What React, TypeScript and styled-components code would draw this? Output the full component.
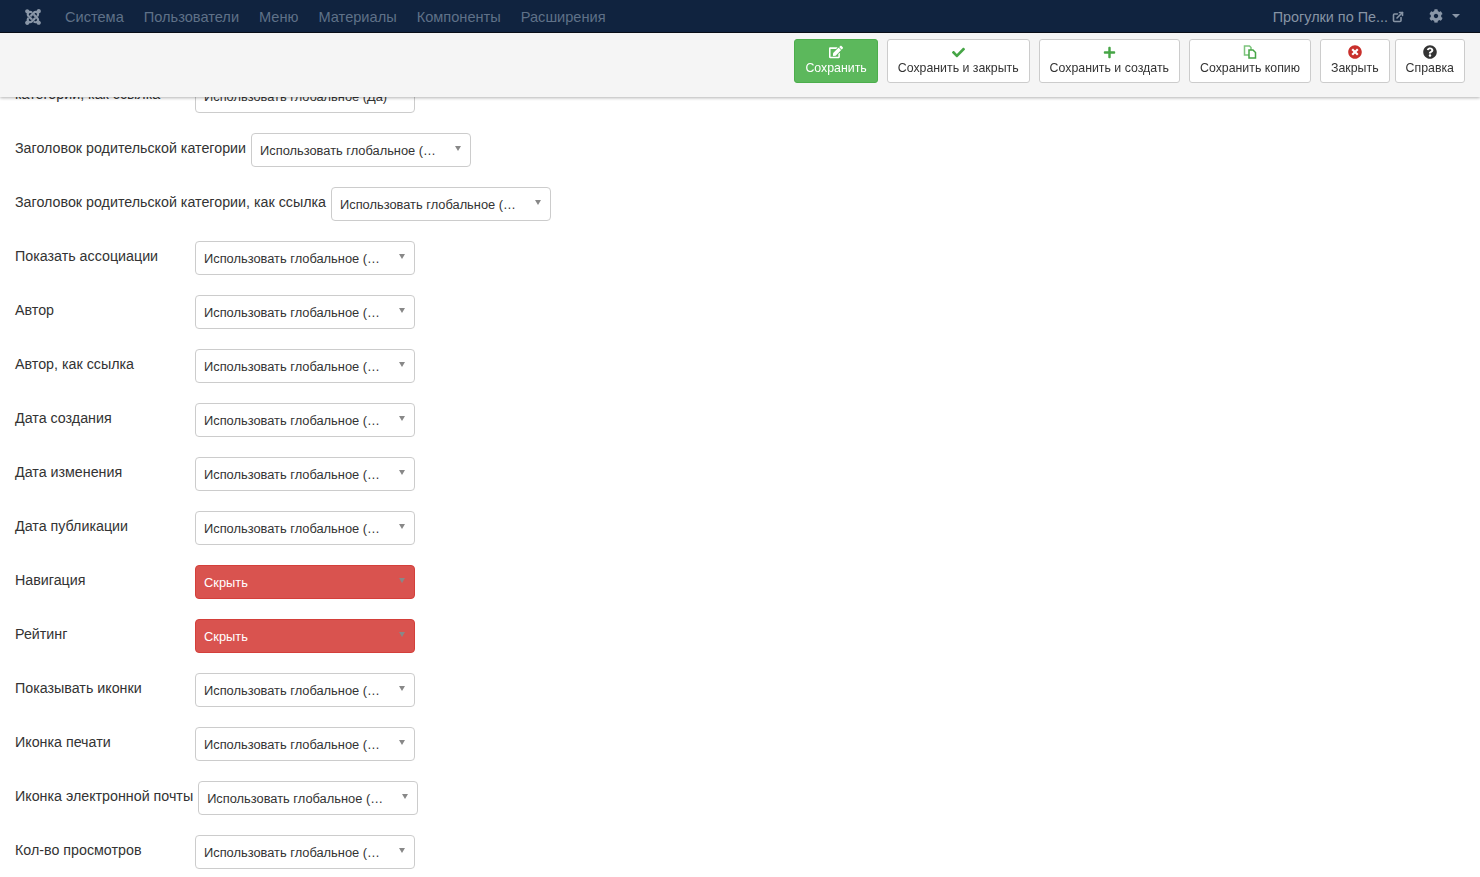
import React from 'react';
import styled, {createGlobalStyle} from "styled-components";
import {FaCheck, FaCog, FaEdit, FaJoomla, FaPlus, FaQuestionCircle, FaTimesCircle} from "react-icons/fa";
import {FiExternalLink} from "react-icons/fi";

const GLOBAL_VALUE = 'Использовать глобальное (…'

const navItems = ['Система', 'Пользователи', 'Меню', 'Материалы', 'Компоненты', 'Расширения']

const fields = [
    {label: 'категории, как ссылка', value: 'Использовать глобальное (Да)'},
    {label: 'Заголовок родительской категории'},
    {label: 'Заголовок родительской категории, как ссылка'},
    {label: 'Показать ассоциации'},
    {label: 'Автор'},
    {label: 'Автор, как ссылка'},
    {label: 'Дата создания'},
    {label: 'Дата изменения'},
    {label: 'Дата публикации'},
    {label: 'Навигация', value: 'Скрыть', danger: true},
    {label: 'Рейтинг', value: 'Скрыть', danger: true},
    {label: 'Показывать иконки'},
    {label: 'Иконка печати'},
    {label: 'Иконка электронной почты'},
    {label: 'Кол-во просмотров'},
]

const CopyIcon = () => (
    <svg width="14" height="14" viewBox="0 0 14 14">
        <path d="M1.5 1h5l1.5 1.5V10H1.5z" fill="#fff" stroke="#7cc47c" strokeWidth="1.5"/>
        <path d="M6 5h4l2.5 2.5V13H6z" fill="#fff" stroke="#46a546" strokeWidth="1.5"/>
    </svg>
)

const App = () => {
    return (
        <>
            <GlobalStyle/>
            <Header>
                <NavBar>
                    <Logo><FaJoomla size={18}/></Logo>
                    {navItems.map(item => <NavItem key={item}>{item}</NavItem>)}
                    <SiteLink>Прогулки по Пе... <FiExternalLink size={12} strokeWidth={3.2}/></SiteLink>
                    <GearMenu><FaCog size={14}/><NavCaret/></GearMenu>
                </NavBar>
                <Toolbar>
                    <ToolButton $primary>
                        <IconSlot><FaEdit size={14} color="#fff"/></IconSlot>
                        Сохранить
                    </ToolButton>
                    <ToolButton>
                        <IconSlot><FaCheck size={13} color="#46a546"/></IconSlot>
                        Сохранить и закрыть
                    </ToolButton>
                    <ToolButton>
                        <IconSlot><FaPlus size={13} color="#46a546"/></IconSlot>
                        Сохранить и создать
                    </ToolButton>
                    <ToolButton>
                        <IconSlot><CopyIcon/></IconSlot>
                        Сохранить копию
                    </ToolButton>
                    <ToolButton>
                        <IconSlot><FaTimesCircle size={14} color="#c9302c"/></IconSlot>
                        Закрыть
                    </ToolButton>
                    <ToolButton $tight>
                        <IconSlot><FaQuestionCircle size={14} color="#333"/></IconSlot>
                        Справка
                    </ToolButton>
                </Toolbar>
            </Header>
            <Form>
                {fields.map(field => (
                    <FieldRow key={field.label}>
                        <FieldLabel>{field.label}</FieldLabel>
                        <Select $danger={field.danger}>
                            {field.value || GLOBAL_VALUE}
                            <SelectArrow/>
                        </Select>
                    </FieldRow>
                ))}
            </Form>
        </>
    );
};

export default App;


const GlobalStyle = createGlobalStyle`
  html, body {
    margin: 0;
    height: 100%;
    overflow: hidden;
    background: #fff;
    font-family: "Liberation Sans", Arial, sans-serif;
    color: #333;
  }
`

const Header = styled.header`
  position: fixed;
  top: 0;
  left: 0;
  right: 0;
  z-index: 10;
`

const NavBar = styled.nav`
  height: 33px;
  box-sizing: border-box;
  border-bottom: 1px solid #0a0f1a;
  background: #10233f;
  display: flex;
  align-items: center;
  padding: 2px 20px 0 24px;
  font-size: 14.6px;
  color: #5f7188;
`

const Logo = styled.span`
  display: flex;
  width: 41px;
  color: #8a97a8;
`

const NavItem = styled.span`
  margin-right: 20px;
`

const SiteLink = styled.span`
  margin-left: auto;
  display: flex;
  align-items: center;
  gap: 4px;
  color: #8794a5;
  font-size: 14.4px;
  margin-right: 25px;
`

const GearMenu = styled.span`
  display: flex;
  align-items: center;
  gap: 9px;
  margin-top: -2px;
  color: #8a97a8;
`

const NavCaret = styled.span`
  border-top: 4px solid #8a97a8;
  border-left: 4px solid transparent;
  border-right: 4px solid transparent;
`

const Toolbar = styled.div`
  height: 64px;
  box-sizing: border-box;
  background: #f5f5f5;
  box-shadow: 0 1px 3px rgba(0, 0, 0, .3);
  display: flex;
  justify-content: flex-end;
  align-items: flex-start;
  padding: 6px 15px 0 0;
`

const ToolButton = styled.div<{ $primary?: boolean; $tight?: boolean }>`
  height: 44px;
  box-sizing: border-box;
  padding: 5px 10px 0;
  margin-left: ${props => props.$tight ? '5px' : '9px'};
  border: 1px solid ${props => props.$primary ? '#4cae4c' : '#ccc'};
  border-radius: 3px;
  background: ${props => props.$primary ? '#5cb85c' : '#fff'};
  color: ${props => props.$primary ? '#fff' : '#333'};
  display: flex;
  flex-direction: column;
  align-items: center;
  gap: 1px;
  font-size: 12.35px;
  line-height: 17px;
  white-space: nowrap;
`

const IconSlot = styled.span`
  display: flex;
  align-items: center;
  justify-content: center;
  height: 14px;
`

const Form = styled.main`
  padding: 79px 0 0 15px;
`

const FieldRow = styled.div`
  display: flex;
  align-items: flex-start;
  margin-bottom: 20px;
`

const FieldLabel = styled.label`
  min-width: 175px;
  margin-right: 5px;
  padding-top: 5px;
  font-size: 14.27px;
  line-height: 20px;
  white-space: nowrap;
`

const Select = styled.div<{ $danger?: boolean }>`
  position: relative;
  flex: none;
  width: 220px;
  height: 34px;
  box-sizing: border-box;
  padding: 8px 0 0 8px;
  border: 1px solid ${props => props.$danger ? '#d43f3a' : '#ccc'};
  border-radius: 4px;
  background: ${props => props.$danger ? '#d9534f' : '#fff'};
  color: ${props => props.$danger ? '#fff' : '#333'};
  font-size: 12.85px;
  line-height: 18px;
  white-space: nowrap;
`

const SelectArrow = styled.span`
  position: absolute;
  top: 12px;
  right: 9px;
  border-top: 5px solid #888;
  border-left: 3.5px solid transparent;
  border-right: 3.5px solid transparent;
`
